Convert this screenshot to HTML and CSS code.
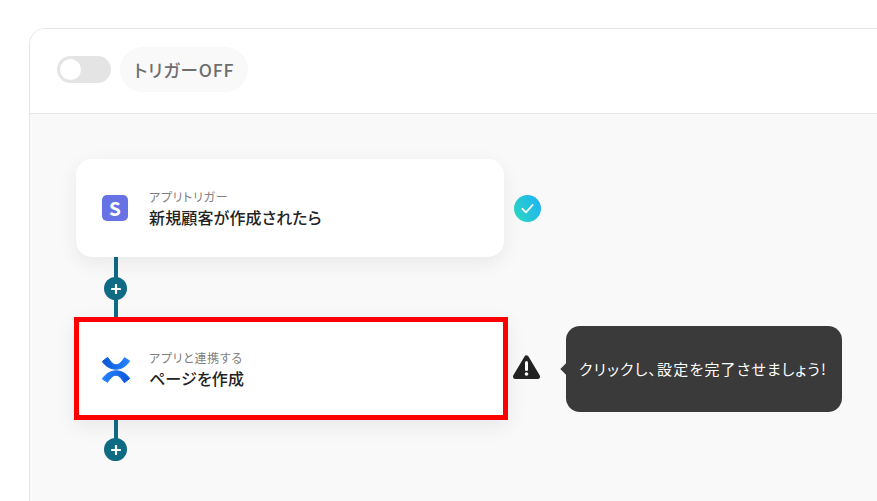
FILE: index.html
```html
<!DOCTYPE html>
<html lang="ja">
<head>
    <title>Flow</title>
    <meta name="viewport" content="width=device-width, initial-scale=1.0">
    <link rel="stylesheet" href="styles.css">
</head>
<body>
    <div class="panel">
        <div class="panel-head">
            <span class="toggle"><span class="toggle-knob"></span></span>
            <span class="trigger-pill">トリガーOFF</span>
        </div>
        <div class="panel-body">
            <div class="step">
                <div class="card">
                    <span class="stripe-icon">S</span>
                    <div class="card-text">
                        <div class="card-label">アプリトリガー</div>
                        <div class="card-title">新規顧客が作成されたら</div>
                    </div>
                </div>
                <svg class="status-check" width="27" height="27" viewBox="0 0 27 27">
                    <defs>
                        <linearGradient id="checkGrad" x1="0" y1="0.8" x2="1" y2="0.3">
                            <stop offset="0" stop-color="#2bd6c0"/>
                            <stop offset="1" stop-color="#1eb4f2"/>
                        </linearGradient>
                    </defs>
                    <circle cx="13.5" cy="13.5" r="13.5" fill="url(#checkGrad)"/>
                    <path d="M8.4 13.8l3.6 3.6 6.6-7.4" fill="none" stroke="#fff" stroke-width="1.8" stroke-linecap="round" stroke-linejoin="round"/>
                </svg>
            </div>
            <div class="connector">
                <span class="add-btn">
                    <svg width="10" height="10" viewBox="0 0 10 10"><path d="M5 1v8M1 5h8" stroke="#fff" stroke-width="2.2" stroke-linecap="round"/></svg>
                </span>
            </div>
            <div class="step">
                <div class="card card-alert">
                    <svg class="confluence-icon" width="30" height="30" viewBox="0 0 30 30">
                        <defs>
                            <linearGradient id="confGrad" gradientUnits="userSpaceOnUse" x1="2" y1="4" x2="28" y2="10">
                                <stop offset="0" stop-color="#0b55d6"/>
                                <stop offset="1" stop-color="#2684ff"/>
                            </linearGradient>
                        </defs>
                        <path d="M1.300 6.500L6.600 2.300C9.500 6.300 12 9.800 15 9.800C18 9.800 20.500 7 23.500 2.700L28.700 6C25.500 11 20.500 14.200 15 14.200C9.500 14.200 4.800 11.500 1.300 6.500z" fill="url(#confGrad)" stroke="url(#confGrad)" stroke-width="1" stroke-linejoin="round"/>
                        <path d="M1.300 6.500L6.600 2.300C9.500 6.300 12 9.800 15 9.800C18 9.800 20.500 7 23.500 2.700L28.700 6C25.500 11 20.500 14.200 15 14.200C9.500 14.200 4.800 11.500 1.300 6.500z" transform="rotate(180 15 15)" fill="url(#confGrad)" stroke="url(#confGrad)" stroke-width="1" stroke-linejoin="round"/>
                    </svg>
                    <div class="card-text">
                        <div class="card-label">アプリと連携する</div>
                        <div class="card-title">ページを作成</div>
                    </div>
                </div>
                <svg class="status-warn" width="27" height="24" viewBox="0 0 27 24">
                    <path d="M13.500 3L24.500 21.500H2.500z" fill="#222" stroke="#222" stroke-width="5" stroke-linejoin="round"/>
                    <path d="M13.500 7.500v7" stroke="#fff" stroke-width="3" stroke-linecap="round"/>
                    <circle cx="13.500" cy="19" r="1.800" fill="#fff"/>
                </svg>
                <div class="tooltip">クリックし、設定を完了させましょう!</div>
            </div>
            <div class="connector connector-end">
                <span class="add-btn">
                    <svg width="10" height="10" viewBox="0 0 10 10"><path d="M5 1v8M1 5h8" stroke="#fff" stroke-width="2.2" stroke-linecap="round"/></svg>
                </span>
            </div>
        </div>
    </div>
</body>
</html>
```

FILE: styles.css
```css
html, body {
    height: 100%;
    margin: 0;
    overflow: hidden;
}
body {
    background-color: white;
    font-family: "Noto Sans CJK JP", "Noto Sans", sans-serif;
    font-feature-settings: "palt";
    padding: 28px 0 0 29px;
    box-sizing: border-box;
}
.panel {
    width: 1000px;
    height: 600px;
    border: 1px solid #e4e4e4;
    border-radius: 16px;
    background: #f9f9f9;
    overflow: hidden;
}
.panel-head {
    display: flex;
    align-items: center;
    height: 81px;
    padding: 0 0 3px 27px;
    background: white;
    border-bottom: 1px solid #e4e4e4;
}
.toggle {
    display: block;
    width: 54px;
    height: 27px;
    border-radius: 14px;
    background: #e4e4e4;
    padding: 3px;
    box-sizing: border-box;
}
.toggle-knob {
    display: block;
    width: 21px;
    height: 21px;
    border-radius: 50%;
    background: white;
}
.trigger-pill {
    margin-left: 9px;
    height: 45px;
    width: 128px;
    border-radius: 23px;
    background: #f9f9f9;
    color: #6e6e6e;
    font-size: 17.5px;
    font-weight: 500;
    letter-spacing: 0.8px;
    line-height: 45px;
    text-align: center;
}
.panel-body {
    padding: 45px 0 0 46px;
}
.step {
    display: flex;
    align-items: center;
}
.card {
    display: flex;
    align-items: center;
    box-sizing: border-box;
    width: 428px;
    height: 98px;
    padding-left: 26px;
    background: white;
    border-radius: 16px;
    box-shadow: 0 6px 20px rgba(0, 0, 0, 0.07);
}
.card-alert {
    width: 434px;
    height: 103px;
    margin-left: -2px;
    padding-left: 22px;
    border: 5px solid #f00;
    border-radius: 0;
}
.stripe-icon {
    display: block;
    width: 26px;
    height: 26px;
    border-radius: 5px;
    background: #6772e5;
    color: white;
    font-size: 19px;
    font-weight: 700;
    line-height: 26px;
    text-align: center;
}
.confluence-icon {
    flex: none;
    margin-top: 2px;
}
.card-text {
    margin-left: 21px;
    padding-top: 1px;
}
.card-alert .card-text {
    margin-left: 18px;
    padding-top: 3px;
}
.card-label {
    color: #808080;
    font-size: 12px;
    letter-spacing: 0.7px;
    line-height: 16px;
}
.card-title {
    color: #222;
    font-size: 16px;
    font-weight: 500;
    letter-spacing: 0.15px;
    line-height: 24px;
}
.status-check {
    margin-left: 10px;
}
.status-warn {
    margin: 0 0 3px 5px;
}
.tooltip {
    position: relative;
    box-sizing: border-box;
    width: 276px;
    height: 86px;
    margin-left: 26px;
    padding-left: 13px;
    border-radius: 14px;
    background: #3a3a3a;
    color: white;
    font-size: 15px;
    letter-spacing: 1.15px;
    line-height: 86px;
    white-space: nowrap;
}
/* little arrow on the left of the tooltip */
.tooltip::before {
    content: "";
    position: absolute;
    left: -4px;
    top: 39px;
    width: 8px;
    height: 8px;
    background: #3a3a3a;
    transform: rotate(45deg);
}
.connector {
    display: flex;
    flex-direction: column;
    align-items: center;
    width: 23px;
    height: 60px;
    margin-left: 28px;
    background: linear-gradient(#0f6a84, #0f6a84) center / 4px 100% no-repeat;
    padding-top: 20px;
    box-sizing: border-box;
}
.connector-end {
    padding-top: 18px;
    background-size: 4px 20px;
    background-position: top center;
}
.add-btn {
    display: flex;
    align-items: center;
    justify-content: center;
    width: 23px;
    height: 23px;
    border-radius: 50%;
    background: #0f6a84;
}
```
